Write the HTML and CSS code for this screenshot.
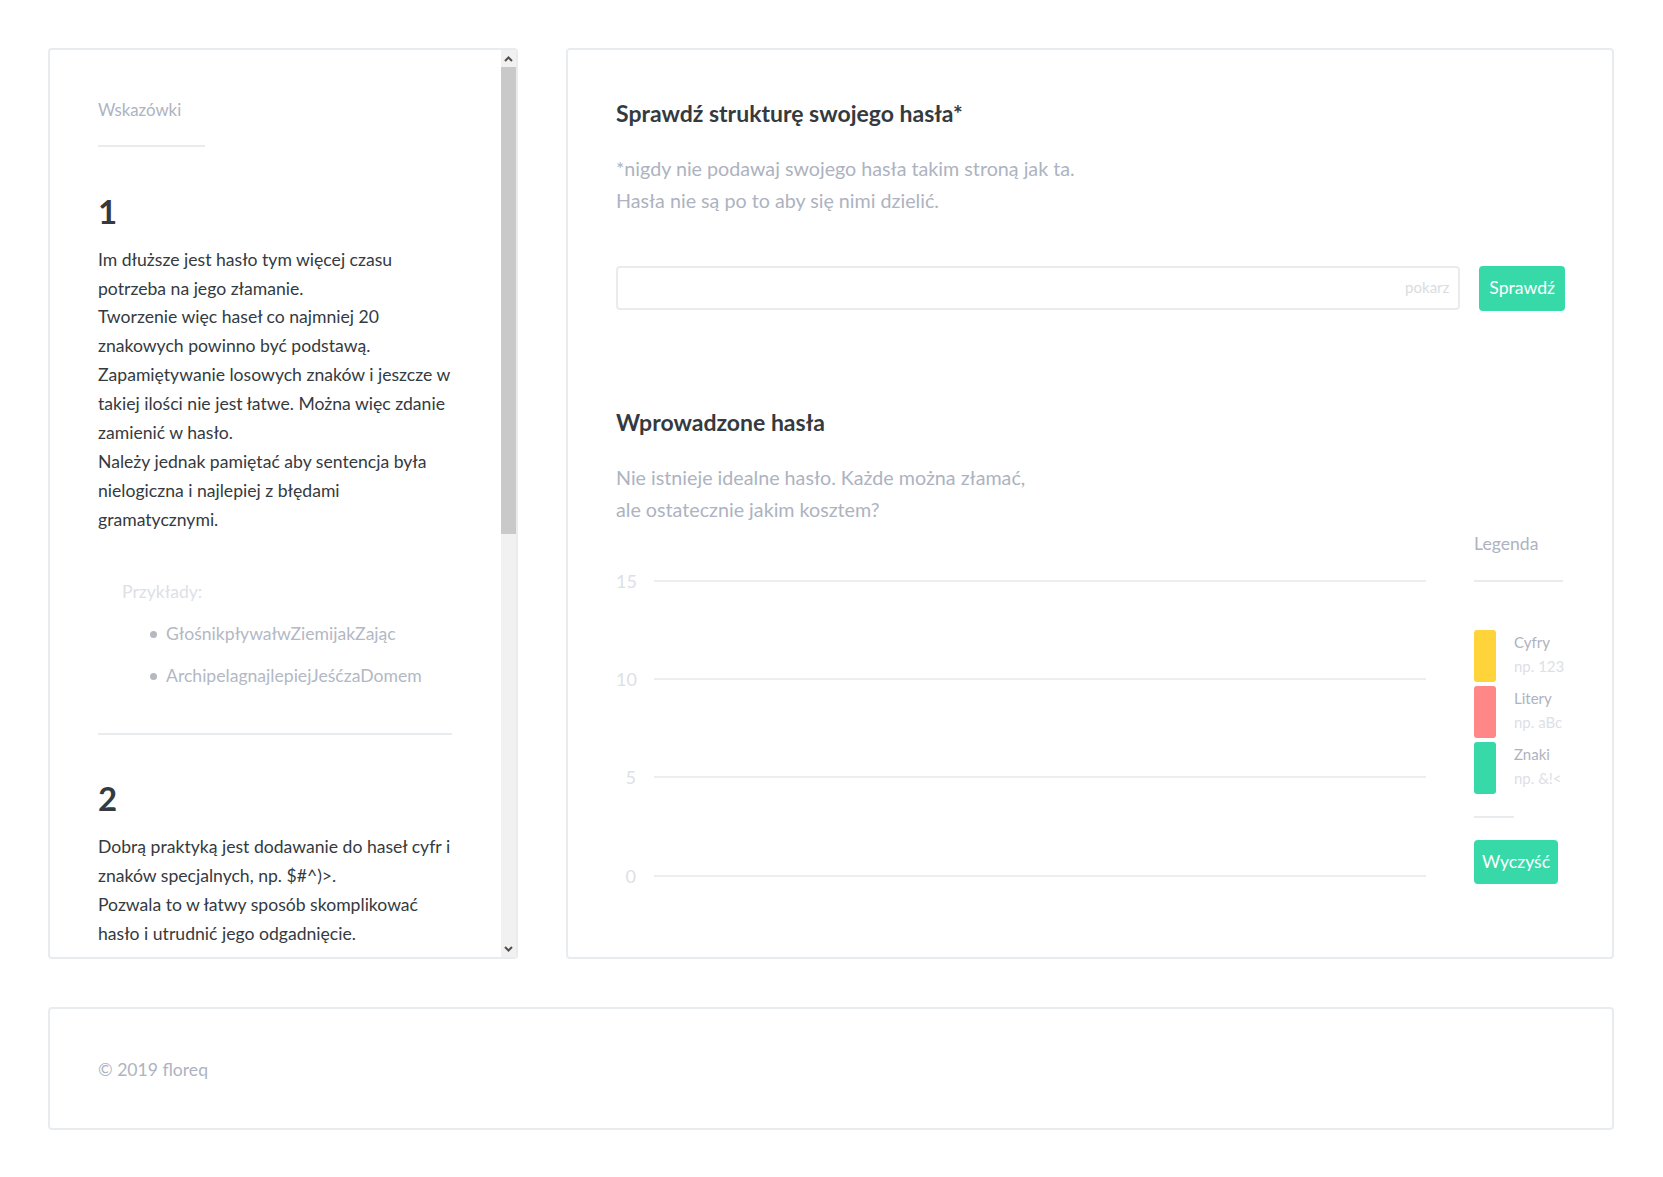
FILE: index.html
```html
<!DOCTYPE html>
<html lang="pl">
<head>
<meta charset="utf-8">
<title>Sprawdź strukturę swojego hasła</title>
<link rel="stylesheet" href="styles.css">
</head>
<body>
<div class="page">
  <main class="layout">
    <aside class="card hints">
      <div class="hints-body">
        <div class="hints-title">Wskazówki</div>

        <article class="hint">
          <h3 class="hint-num">1</h3>
          <p class="hint-text">Im dłuższe jest hasło tym więcej czasu<br>potrzeba na jego złamanie.<br>Tworzenie więc haseł co najmniej 20<br>znakowych powinno być podstawą.<br>Zapamiętywanie losowych znaków i jeszcze w<br>takiej ilości nie jest łatwe. Można więc zdanie<br>zamienić w hasło.<br>Należy jednak pamiętać aby sentencja była<br>nielogiczna i najlepiej z błędami<br>gramatycznymi.</p>
          <div class="examples">
            <div class="examples-title">Przykłady:</div>
            <ul class="examples-list">
              <li>GłośnikpływałwZiemijakZając</li>
              <li>ArchipelagnajlepiejJeśćzaDomem</li>
            </ul>
          </div>
        </article>

        <article class="hint">
          <h3 class="hint-num">2</h3>
          <p class="hint-text">Dobrą praktyką jest dodawanie do haseł cyfr i<br>znaków specjalnych, np. $#^)&gt;.<br>Pozwala to w łatwy sposób skomplikować<br>hasło i utrudnić jego odgadnięcie.</p>
        </article>
      </div>

      <div class="scrollbar" aria-hidden="true">
        <span class="scrollbar-btn">
          <svg width="9" height="6" viewBox="0 0 9 6"><path d="M1 5 L4.5 1.5 L8 5" fill="none" stroke="#505050" stroke-width="2"/></svg>
        </span>
        <span class="scrollbar-thumb"></span>
        <span class="scrollbar-track"></span>
        <span class="scrollbar-btn">
          <svg width="9" height="6" viewBox="0 0 9 6"><path d="M1 1 L4.5 4.5 L8 1" fill="none" stroke="#505050" stroke-width="2"/></svg>
        </span>
      </div>
    </aside>

    <section class="card checker">
      <h2 class="title">Sprawdź strukturę swojego hasła*</h2>
      <p class="lead">*nigdy nie podawaj swojego hasła takim stroną jak ta.<br>Hasła nie są po to aby się nimi dzielić.</p>

      <div class="check-row">
        <label class="field">
          <input class="field-input" type="password" aria-label="Hasło">
          <span class="field-toggle">pokarz</span>
        </label>
        <button class="btn btn-check" type="button">Sprawdź</button>
      </div>

      <h2 class="title title-second">Wprowadzone hasła</h2>
      <p class="lead">Nie istnieje idealne hasło. Każde można złamać,<br>ale ostatecznie jakim kosztem?</p>

      <div class="chart-row">
        <div class="chart">
          <div class="tick"><span class="tick-label">15</span><span class="tick-rule"></span></div>
          <div class="tick"><span class="tick-label">10</span><span class="tick-rule"></span></div>
          <div class="tick"><span class="tick-label">5</span><span class="tick-rule"></span></div>
          <div class="tick"><span class="tick-label">0</span><span class="tick-rule"></span></div>
        </div>

        <aside class="legend">
          <div class="legend-title">Legenda</div>
          <div class="legend-items">
            <div class="legend-item">
              <span class="swatch swatch-yellow"></span>
              <div class="legend-text"><div class="legend-name">Cyfry</div><div class="legend-sub">np. 123</div></div>
            </div>
            <div class="legend-item">
              <span class="swatch swatch-red"></span>
              <div class="legend-text"><div class="legend-name">Litery</div><div class="legend-sub">np. aBc</div></div>
            </div>
            <div class="legend-item">
              <span class="swatch swatch-teal"></span>
              <div class="legend-text"><div class="legend-name">Znaki</div><div class="legend-sub">np. &amp;!&lt;</div></div>
            </div>
          </div>
          <div class="legend-sep"></div>
          <button class="btn btn-clear" type="button">Wyczyść</button>
        </aside>
      </div>
    </section>
  </main>

  <footer class="card footer">© 2019 floreq</footer>
</div>
</body>
</html>
```

FILE: styles.css
```css
* {
  box-sizing: border-box;
}

html,
body {
  margin: 0;
  padding: 0;
  background: #ffffff;
}

body {
  font-family: "Lato", "Open Sans", sans-serif;
  font-size: 17.6px;
  line-height: 28.9px;
  color: #343a40;
}

.page {
  padding: 48px 49px 48px 48px;
}

.layout {
  display: flex;
  gap: 48px;
  height: 911px;
}

.card {
  border: 2px solid #e9ecef;
  border-radius: 4px;
  background: #ffffff;
}

/* ---------- hints column ---------- */

.hints {
  flex: none;
  display: flex;
  width: 470px;
  overflow: hidden;
}

.hints-body {
  flex: 1;
  min-width: 0;
  overflow-y: auto;
  overflow-x: hidden;
  scrollbar-width: none;
  padding: 45px 49px 46px 48px;
}

.hints-body::-webkit-scrollbar {
  display: none;
}

.scrollbar {
  flex: none;
  display: flex;
  flex-direction: column;
  width: 15px;
  background: #f1f1f1;
}

.scrollbar-btn {
  display: flex;
  align-items: center;
  justify-content: center;
  height: 17px;
}

.scrollbar-thumb {
  height: 467px;
  background: #c9c9c9;
}

.scrollbar-track {
  flex: 1;
}

.hints-title {
  width: 107px;
  font-size: 16.8px;
  line-height: 29px;
  color: #adb3c0;
  padding-bottom: 21px;
  border-bottom: 2px solid #e9ecef;
}

.hint {
  margin-top: 45px;
}

.hint + .hint {
  margin-top: 42px;
  padding-top: 44px;
  border-top: 2px solid #e9ecef;
}

.hint-num {
  margin: 0;
  font-size: 33px;
  line-height: 39.6px;
  font-weight: 700;
  color: #343a40;
}

.hint-text {
  margin: 14px 0 0;
  white-space: nowrap;
}

.examples {
  margin-top: 43px;
}

.examples-title {
  padding-left: 24px;
  color: #dde0e6;
}

.examples-list {
  list-style: none;
  margin: 13px 0 0;
  padding: 0 0 0 52px;
  color: #b3b8c4;
}

.examples-list li {
  display: flex;
  align-items: center;
  gap: 9px;
  white-space: nowrap;
}

.examples-list li + li {
  margin-top: 14px;
}

.examples-list li::before {
  content: "";
  flex: none;
  width: 7px;
  height: 7px;
  border-radius: 50%;
  background: #b3b8c2;
}

/* ---------- checker ---------- */

.checker {
  flex: 1;
  padding: 50px 47px 48px 48px;
}

.title {
  margin: 0;
  font-size: 23px;
  line-height: 27.6px;
  font-weight: 700;
  color: #343a40;
}

.title-second {
  margin-top: 98px;
}

.lead {
  margin: 25.5px 0 0;
  font-size: 19.7px;
  line-height: 31.8px;
  color: #adb3c0;
}

.check-row {
  display: flex;
  align-items: flex-start;
  gap: 19px;
  margin-top: 49px;
}

.field {
  flex: 1;
  display: flex;
  align-items: center;
  height: 44px;
  border: 2px solid #e9ecef;
  border-radius: 4px;
  padding: 0 9px 0 12px;
}

.field-input {
  flex: 1;
  min-width: 0;
  height: 100%;
  border: 0;
  outline: 0;
  background: transparent;
  font: inherit;
  color: #343a40;
}

.field-toggle {
  font-size: 15px;
  color: #d9dce2;
}

.btn {
  flex: none;
  height: 45px;
  padding: 0 10px;
  border: 0;
  border-radius: 4px;
  background: #38d9a9;
  color: #ffffff;
  font-family: inherit;
  font-size: 17.6px;
  line-height: 1;
}

/* ---------- chart ---------- */

.chart-row {
  display: flex;
  gap: 48px;
  margin-top: 5px;
}

.chart {
  flex: 1;
  display: flex;
  flex-direction: column;
  gap: 78.3px;
  padding-top: 40.5px;
}

.tick {
  display: flex;
  align-items: center;
  height: 20px;
}

.tick-label {
  width: 20px;
  text-align: right;
  font-size: 18px;
  line-height: 20px;
  color: #dde0e6;
}

.tick-rule {
  flex: 1;
  height: 2px;
  margin-left: 18px;
  background: #eceef1;
}

.legend {
  flex: none;
  width: 91px;
}

.legend-title {
  width: 89px;
  line-height: 28.7px;
  color: #adb3c0;
  padding-bottom: 21px;
  border-bottom: 2px solid #e9ecef;
}

.legend-items {
  display: flex;
  flex-direction: column;
  gap: 4px;
  margin-top: 48px;
}

.legend-item {
  display: flex;
  gap: 18px;
}

.swatch {
  flex: none;
  width: 22px;
  height: 52px;
  border-radius: 3px;
}

.swatch-yellow {
  background: #ffd43b;
}

.swatch-red {
  background: #ff8787;
}

.swatch-teal {
  background: #38d9a9;
}

.legend-text {
  font-size: 15px;
  line-height: 24px;
}

.legend-name {
  color: #adb3c0;
}

.legend-sub {
  color: #dde0e6;
}

.legend-sep {
  width: 40px;
  height: 2px;
  margin-top: 22px;
  background: #e9ecef;
}

.btn-clear {
  display: block;
  height: 44px;
  margin-top: 22px;
  padding: 0 8px;
}

/* ---------- footer ---------- */

.footer {
  margin-top: 48px;
  padding: 47px 48px 43px;
  color: #adb3c0;
}
```
